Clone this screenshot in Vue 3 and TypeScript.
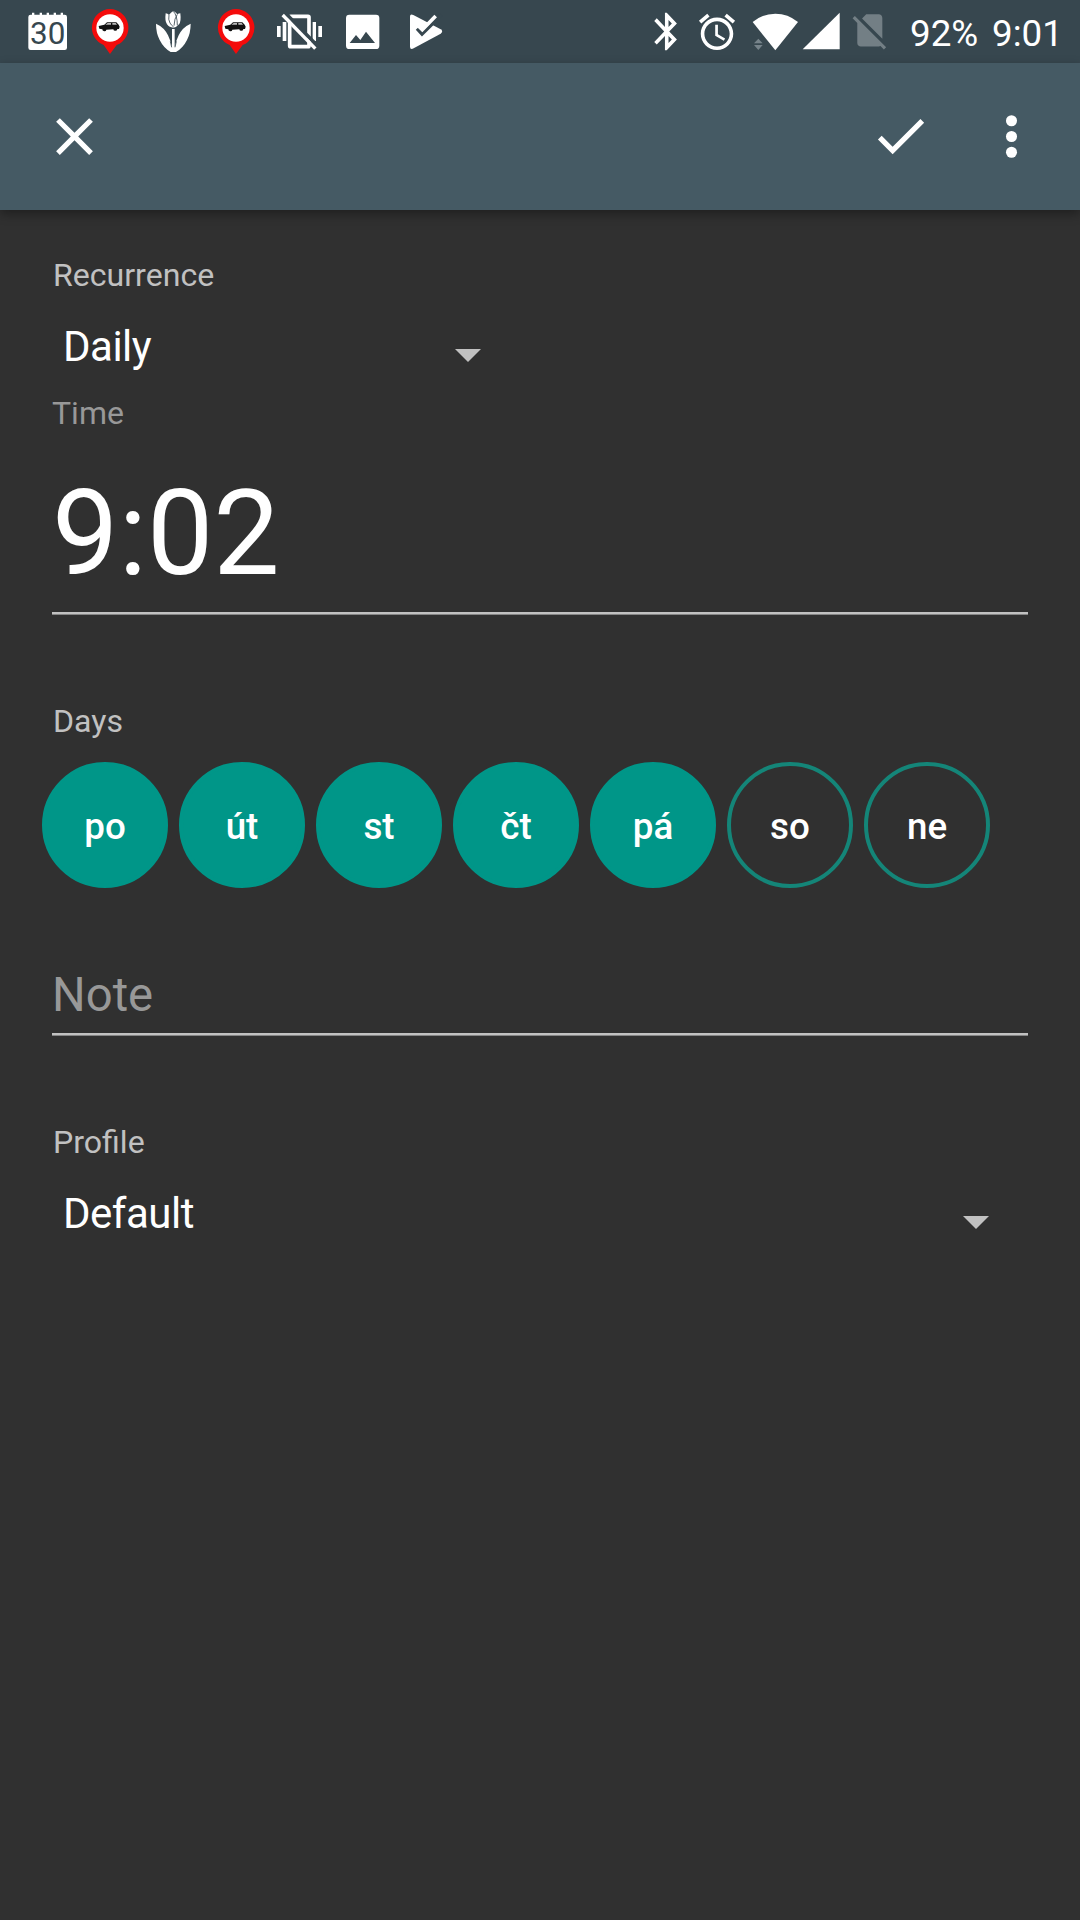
<script setup lang="ts">
interface Day {
  label: string
  active: boolean
}

const days: Day[] = [
  { label: 'po', active: true },
  { label: 'út', active: true },
  { label: 'st', active: true },
  { label: 'čt', active: true },
  { label: 'pá', active: true },
  { label: 'so', active: false },
  { label: 'ne', active: false },
]
</script>

<template>
  <div class="screen">
    <header class="status">
      <div class="notifications">
        <svg class="cell" viewBox="45 0 189 189">
          <path fill="#fff" d="M92 44h4v-6h7v6h16v-6h7v6h14v-6h7v6h14v-6h7v6h14v-6h7v6h5q7 0 7 7v92q0 7-7 7H92q-7 0-7-7V51q0-7 7-7z" />
          <text x="90" y="131" class="cal" textLength="106" lengthAdjust="spacingAndGlyphs">30</text>
        </svg>
        <svg class="cell" viewBox="234 0 189 189">
          <path fill="#f40b0b" d="M330 27a56 56 0 0 1 20 108l-20 27-19-27A56 56 0 0 1 330 27z" />
          <circle cx="330" cy="84" r="41" fill="#fff" />
          <path fill="#111" d="M296 78l17-4 8-7h28l7 7 3 6-2 7h-5a6 5 0 0 1-12 1l-21 1a6 5 0 0 1-12-1l-9-2z" />
          <path fill="#bbb" d="M316 74l7-5h10v5zM337 69h10l4 5h-14z" />
        </svg>
        <svg class="cell" viewBox="423 0 189 189">
          <path fill="#fff" d="M468 71q25 11 36 35 9 18 12 36V87h8v55q3-18 12-36 11-24 36-35 0 28-11 49-12 24-33 36h-16q-21-12-33-36-11-21-11-49z" />
          <path fill="#fff" d="M497 40q6 1 10 5 5-8 13-12 8 4 12 10 4-3 9-3 3 25-4 33-7 9-17 10-12 0-19-10-7-9-4-33z" />
          <path fill="none" stroke="#37474f" stroke-width="2.5" d="M507 45q-3 14 3 24 4 7 11 12M520 34q12 12 12 42M532 43q-9 12-10 34M515 142l-4-18M525 142l4-18" />
        </svg>
        <svg class="cell" viewBox="234 0 189 189">
          <path fill="#f40b0b" d="M330 27a56 56 0 0 1 20 108l-20 27-19-27A56 56 0 0 1 330 27z" />
          <circle cx="330" cy="84" r="41" fill="#fff" />
          <path fill="#111" d="M296 78l17-4 8-7h28l7 7 3 6-2 7h-5a6 5 0 0 1-12 1l-21 1a6 5 0 0 1-12-1l-9-2z" />
          <path fill="#bbb" d="M316 74l7-5h10v5zM337 69h10l4 5h-14z" />
        </svg>
        <svg class="cell" viewBox="141 0 189 189">
          <path fill="#fff" d="M171 78h11v33h-11zM188 66h11v57h-11zM278 66h10v57h-10zM295 78h11v33h-11z" />
          <rect x="209" y="49" width="58" height="91" rx="3" fill="none" stroke="#fff" stroke-width="11" />
          <path stroke="#37474f" stroke-width="11" d="M195 38l100 102" />
          <path stroke="#fff" stroke-width="10" d="M188 45l98 101" />
        </svg>
        <svg class="cell" viewBox="330 0 189 189">
          <rect x="378" y="44" width="100" height="103" rx="10" fill="#fff" />
          <path fill="#37474f" d="M389 129l19-24 13 15 17-25 27 34z" />
        </svg>
        <svg class="cell" viewBox="519 0 189 189">
          <path fill="#fff" d="M570 50q0-10 10-5l82 43q9 6 0 13l-81 44q-11 5-11-5z" />
          <path fill="none" stroke="#37474f" stroke-width="10" d="M591 86l15 16 58-57" />
          <path fill="none" stroke="#fff" stroke-width="11" d="M594 76l13 13 40-41" />
        </svg>
      </div>
      <div class="system">
        <svg width="50" height="63" viewBox="30 0 150 189">
          <path fill="#fff" transform="translate(46 27) scale(5.35 5.62)" d="M17.71 7.71L12 2h-1v7.59L6.41 5 5 6.41 10.59 12 5 17.59 6.41 19 11 14.41V22h1l5.71-5.71-4.3-4.29 4.3-4.29zM13 5.83l1.88 1.88L13 9.59V5.83zm1.88 10.46L13 18.17v-3.76l1.88 1.88z" />
        </svg>
        <svg width="54" height="63" viewBox="180 0 162 189">
          <path fill="#fff" transform="translate(196 31) scale(5.42)" d="M22 5.72l-4.6-3.86-1.29 1.53 4.6 3.86L22 5.72zM7.88 3.39L6.6 1.86 2 5.71l1.29 1.53 4.59-3.85zM12.5 8H11v6l4.75 2.85.75-1.23-4-2.37V8zM12 4c-4.97 0-9 4.03-9 9s4.02 9 9 9c4.97 0 9-4.03 9-9s-4.03-9-9-9zm0 16c-3.87 0-7-3.13-7-7s3.13-7 7-7 7 3.13 7 7-3.13 7-7 7z" />
        </svg>
        <svg width="56" height="63" viewBox="342 0 168 189">
          <path fill="#fff" d="M368 66q30-25 68-25t68 25l-68 85z" />
          <path fill="#76838a" d="M372 130l13-14 13 14zM372 135h26l-13 15z" />
        </svg>
        <svg width="42" height="63" viewBox="510 0 126 189">
          <path fill="#fff" d="M518 148L629 38v110z" />
        </svg>
        <svg width="54" height="63" viewBox="6 0 162 189">
          <path fill="#737f85" transform="translate(25 27) scale(5.37)" d="M18.99 5c0-1.1-.89-2-1.99-2h-7L7.66 5.34 19 16.68 18.99 5zM3.65 3.88L2.38 5.15 5 7.77V19c0 1.1.9 2 2 2h10.01c.35 0 .67-.1.96-.26l1.88 1.88 1.27-1.27L3.65 3.88z" />
        </svg>
        <span class="battery">92%</span>
        <span class="clock">9:01</span>
      </div>
    </header>

    <nav class="appbar">
      <svg class="action" viewBox="0 0 24 24">
        <path fill="#fff" d="M19 6.41L17.59 5 12 10.59 6.41 5 5 6.41 10.59 12 5 17.59 6.41 19 12 13.41 17.59 19 19 17.59 13.41 12z" />
      </svg>
      <div class="actions">
        <svg class="action" viewBox="0 0.25 24 24">
          <path fill="#fff" d="M9 16.17L4.83 12l-1.42 1.41L9 19 21 7l-1.41-1.41z" />
        </svg>
        <svg class="action" viewBox="0 0 24 24">
          <g fill="#fff">
            <circle cx="12" cy="6" r="2.1" />
            <circle cx="12" cy="12" r="2.1" />
            <circle cx="12" cy="18" r="2.1" />
          </g>
        </svg>
      </div>
    </nav>

    <main class="form">
      <div class="label first">Recurrence</div>
      <div class="spinner short">
        <span>Daily</span>
        <svg class="caret" viewBox="0 0 26 13"><path fill="#c1c1c1" d="M0 0h26L13 13z" /></svg>
      </div>
      <div class="hint">Time</div>
      <div class="time">9:02</div>

      <div class="label section">Days</div>
      <div class="days">
        <div v-for="d in days" :key="d.label" class="day" :class="{ active: d.active }">{{ d.label }}</div>
      </div>

      <div class="note">Note</div>

      <div class="label section">Profile</div>
      <div class="spinner">
        <span>Default</span>
        <svg class="caret" viewBox="0 0 26 13"><path fill="#c1c1c1" d="M0 0h26L13 13z" /></svg>
      </div>
    </main>
  </div>
</template>

<style>
body {
  background: #303030;
}
</style>

<style scoped>
.screen {
  width: 1080px;
  height: 1920px;
  overflow: hidden;
  background: #303030;
  color: #fff;
  font-family: Roboto, "Noto Sans", sans-serif;
}
.screen svg {
  display: block;
  flex: none;
}
.status {
  display: flex;
  justify-content: space-between;
  height: 63px;
  background: #37474f;
}
.notifications {
  display: flex;
  padding-left: 15px;
}
.cell {
  width: 63px;
  height: 63px;
}
.cal {
  font: 400 92px Roboto, sans-serif;
  fill: #37474f;
}
.system {
  display: flex;
  padding-right: 17px;
  font-size: 36.75px;
  line-height: 67px;
}
.battery {
  width: 68px;
  margin-left: 14px;
}
.clock {
  width: 71px;
  margin-left: 14px;
}
.appbar {
  display: flex;
  justify-content: space-between;
  align-items: center;
  box-sizing: border-box;
  height: 147px;
  padding: 0 37px 0 43px;
  background: #455a64;
  box-shadow: 0 4px 10px rgba(0, 0, 0, 0.35);
}
.actions {
  display: flex;
  gap: 48px;
}
.action {
  width: 63px;
  height: 63px;
}
.form {
  display: flex;
  flex-direction: column;
  padding: 0 52px;
}
.label {
  height: 42px;
  padding-left: 1px;
  font-size: 32.1px;
  line-height: 42px;
  color: #c1c1c1;
}
.first {
  margin-top: 44px;
}
.section {
  margin-top: 85px;
}
.spinner {
  display: flex;
  justify-content: space-between;
  align-items: center;
  height: 101px;
  padding: 0 39.5px 0 11px;
  font-size: 42px;
  line-height: 101px;
  letter-spacing: -0.5px;
}
.short {
  width: 418px;
  padding-right: 0;
}
.caret {
  width: 26px;
  height: 13px;
  margin-top: 18px;
}
.hint {
  height: 33px;
  font-size: 32px;
  line-height: 33px;
  color: #989898;
}
.time {
  height: 157px;
  margin-top: 25px;
  border-bottom: 2px solid #c1c1c1;
  box-shadow: 0 1px 0 #858585;
  margin-bottom: 1px;
  font-size: 118.125px;
  line-height: 158px;
}
.days {
  display: flex;
  gap: 11px;
  margin: 19.5px 0 0 -10px;
}
.day {
  box-sizing: border-box;
  flex: none;
  width: 126px;
  height: 126px;
  border: 4px solid #148578;
  border-radius: 50%;
  font-size: 36.75px;
  font-weight: 500;
  line-height: 122px;
  text-align: center;
}
.active {
  border-color: #009688;
  background: #009688;
}
.note {
  height: 76px;
  margin-top: 69.5px;
  border-bottom: 2px solid #c1c1c1;
  box-shadow: 0 1px 0 #858585;
  margin-bottom: 1px;
  font-size: 47.25px;
  line-height: 76px;
  color: #989898;
}
</style>
